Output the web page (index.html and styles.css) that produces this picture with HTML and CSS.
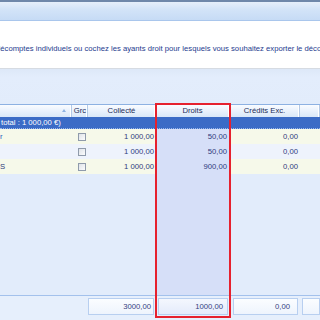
FILE: index.html
```html
<!DOCTYPE html>
<html lang="fr">
<head>
    <meta charset="UTF-8">
    <meta name="viewport" content="width=device-width, initial-scale=1.0">
    <title>Export des décomptes</title>
    <link rel="stylesheet" href="styles.css">
</head>
<body>
    <div id="window">
        <div class="titlebar"></div>
        <div class="info">
            <p class="hint">décomptes individuels ou cochez les ayants droit pour lesquels vous souhaitez exporter le décompte</p>
        </div>
        <div class="toolbar"></div>

        <div class="grid">
            <div class="row head">
                <div class="cell name"><span class="sort"></span></div>
                <div class="cell grc">Grc</div>
                <div class="cell">Collecté</div>
                <div class="cell droits">Droits</div>
                <div class="cell">Crédits Exc.</div>
                <div class="cell last"></div>
            </div>
            <div class="group">total : 1 000,00 €)</div>
            <div class="row odd">
                <div class="cell name blue">r</div>
                <div class="cell grc"><span class="check"></span></div>
                <div class="cell num">1 000,00</div>
                <div class="cell num droits">50,00</div>
                <div class="cell num">0,00</div>
                <div class="cell last"></div>
            </div>
            <div class="row even">
                <div class="cell name"></div>
                <div class="cell grc"><span class="check"></span></div>
                <div class="cell num">1 000,00</div>
                <div class="cell num droits">50,00</div>
                <div class="cell num">0,00</div>
                <div class="cell last"></div>
            </div>
            <div class="row odd">
                <div class="cell name">S</div>
                <div class="cell grc"><span class="check"></span></div>
                <div class="cell num">1 000,00</div>
                <div class="cell num droits">900,00</div>
                <div class="cell num">0,00</div>
                <div class="cell last"></div>
            </div>
            <div class="row filler">
                <div class="cell"></div>
                <div class="cell"></div>
                <div class="cell"></div>
                <div class="cell droits"></div>
                <div class="cell"></div>
                <div class="cell"></div>
            </div>
        </div>

        <div class="footer">
            <div class="sum"></div>
            <div class="sum"></div>
            <div class="sum">3000,00</div>
            <div class="sum droits">1000,00</div>
            <div class="sum">0,00</div>
            <div class="sum last"></div>
        </div>

        <div class="selection"></div>
    </div>
</body>
</html>
```

FILE: styles.css
```css
body {
    margin: 0;
    width: 320px;
    height: 320px;
    overflow: hidden;
    font-family: 'Liberation Sans', Arial, sans-serif;
    font-size: 7.7px;
    background-color: #e2ecfb;
}
#window {
    position: relative;
    width: 320px;
    height: 320px;
    overflow: hidden;
}
.titlebar {
    height: 18px;
    border-top: 2px solid #6f88aa;
    border-bottom: 1px solid #a9c6ec;
    background: linear-gradient(#e6effb, #d3e4f8 40%, #c6dbf5);
}
.info {
    height: 47px;
    background-color: #fff;
    border-bottom: 1px solid #d6dbe2;
    overflow: hidden;
}
.hint {
    margin: 23px 0 0 -4px;
    white-space: nowrap;
    color: #253b8e;
    line-height: 9px;
}
.toolbar {
    height: 35px;
    background: linear-gradient(#dde8f8, #e3edfc 8px, #e2ecfb);
}

/* grid */
.grid {
    border-top: 1px solid #8db1e2;
}
.row {
    display: grid;
    grid-template-columns: 72px 16px 68px 74px 70px 1fr;
}
.cell {
    box-sizing: border-box;
    overflow: hidden;
    white-space: nowrap;
}
.head {
    height: 12px;
    line-height: 12px;
    background: linear-gradient(#fafcff, #e9f1fc 50%, #d9e7f8);
    color: #1c2c58;
}
.head .cell {
    text-align: center;
    border-right: 1px solid #b4c9e6;
    box-shadow: inset -1px 0 0 #fff;
}
.head .grc {
    text-align: left;
    padding-left: 1px;
}
.head .name {
    position: relative;
}
.sort {
    position: absolute;
    left: 62px;
    top: 4px;
    width: 0;
    height: 0;
    border-left: 2.5px solid transparent;
    border-right: 2.5px solid transparent;
    border-bottom: 3px solid #8fb3e2;
}
.group {
    height: 11px;
    line-height: 11px;
    padding-left: 1px;
    background-color: #3b6bc6;
    border-bottom: 1px dotted #9ab8ec;
    color: #fff;
}
.odd, .even {
    height: 15px;
    line-height: 15px;
    color: #2f3c7c;
}
.odd { background-color: #f6f9ea; }
.even { background-color: #eef3fc; }
.num {
    text-align: right;
    padding-right: 2px;
}
.num.droits {
    padding-right: 3px;
}
.droits {
    background-color: #d6dff8;
}
.head .droits {
    background: none;
}
.name.blue {
    color: #2b5fbd;
}
.grc {
    display: flex;
    align-items: center;
    justify-content: center;
}
.check {
    width: 6px;
    height: 6px;
    border: 1px solid #8f9bab;
    background: linear-gradient(135deg, #dfe3e8, #fbfcfd);
    margin-left: 3px;
}
.filler {
    height: 121px;
}

/* totals */
.footer {
    display: grid;
    grid-template-columns: 72px 16px 68px 74px 70px 1fr;
    height: 24px;
    border-top: 1px solid #a3c1ec;
    background-color: #e6effc;
}
.sum {
    margin: 2px 2px 0 0;
    height: 15px;
    line-height: 15px;
    text-align: right;
    padding-right: 2px;
    border: 1px solid #b8cff0;
    background: linear-gradient(#fbfdff, #eef4fd);
    color: #34427e;
}
.sum:first-child, .sum:nth-child(2) {
    visibility: hidden;
}
.sum.droits {
    margin-left: 2px;
    margin-right: 2px;
    padding-right: 4px;
    background: linear-gradient(#f4f7fe, #e4ebfb);
}
.sum:nth-child(5) {
    margin-left: 3px;
    padding-right: 7px;
}
.sum.last {
    margin-left: 2px;
    margin-right: 0;
}

/* highlighted column */
.selection {
    position: absolute;
    left: 155px;
    top: 103px;
    width: 72px;
    height: 211px;
    border: 2px solid #e6212e;
}
```
